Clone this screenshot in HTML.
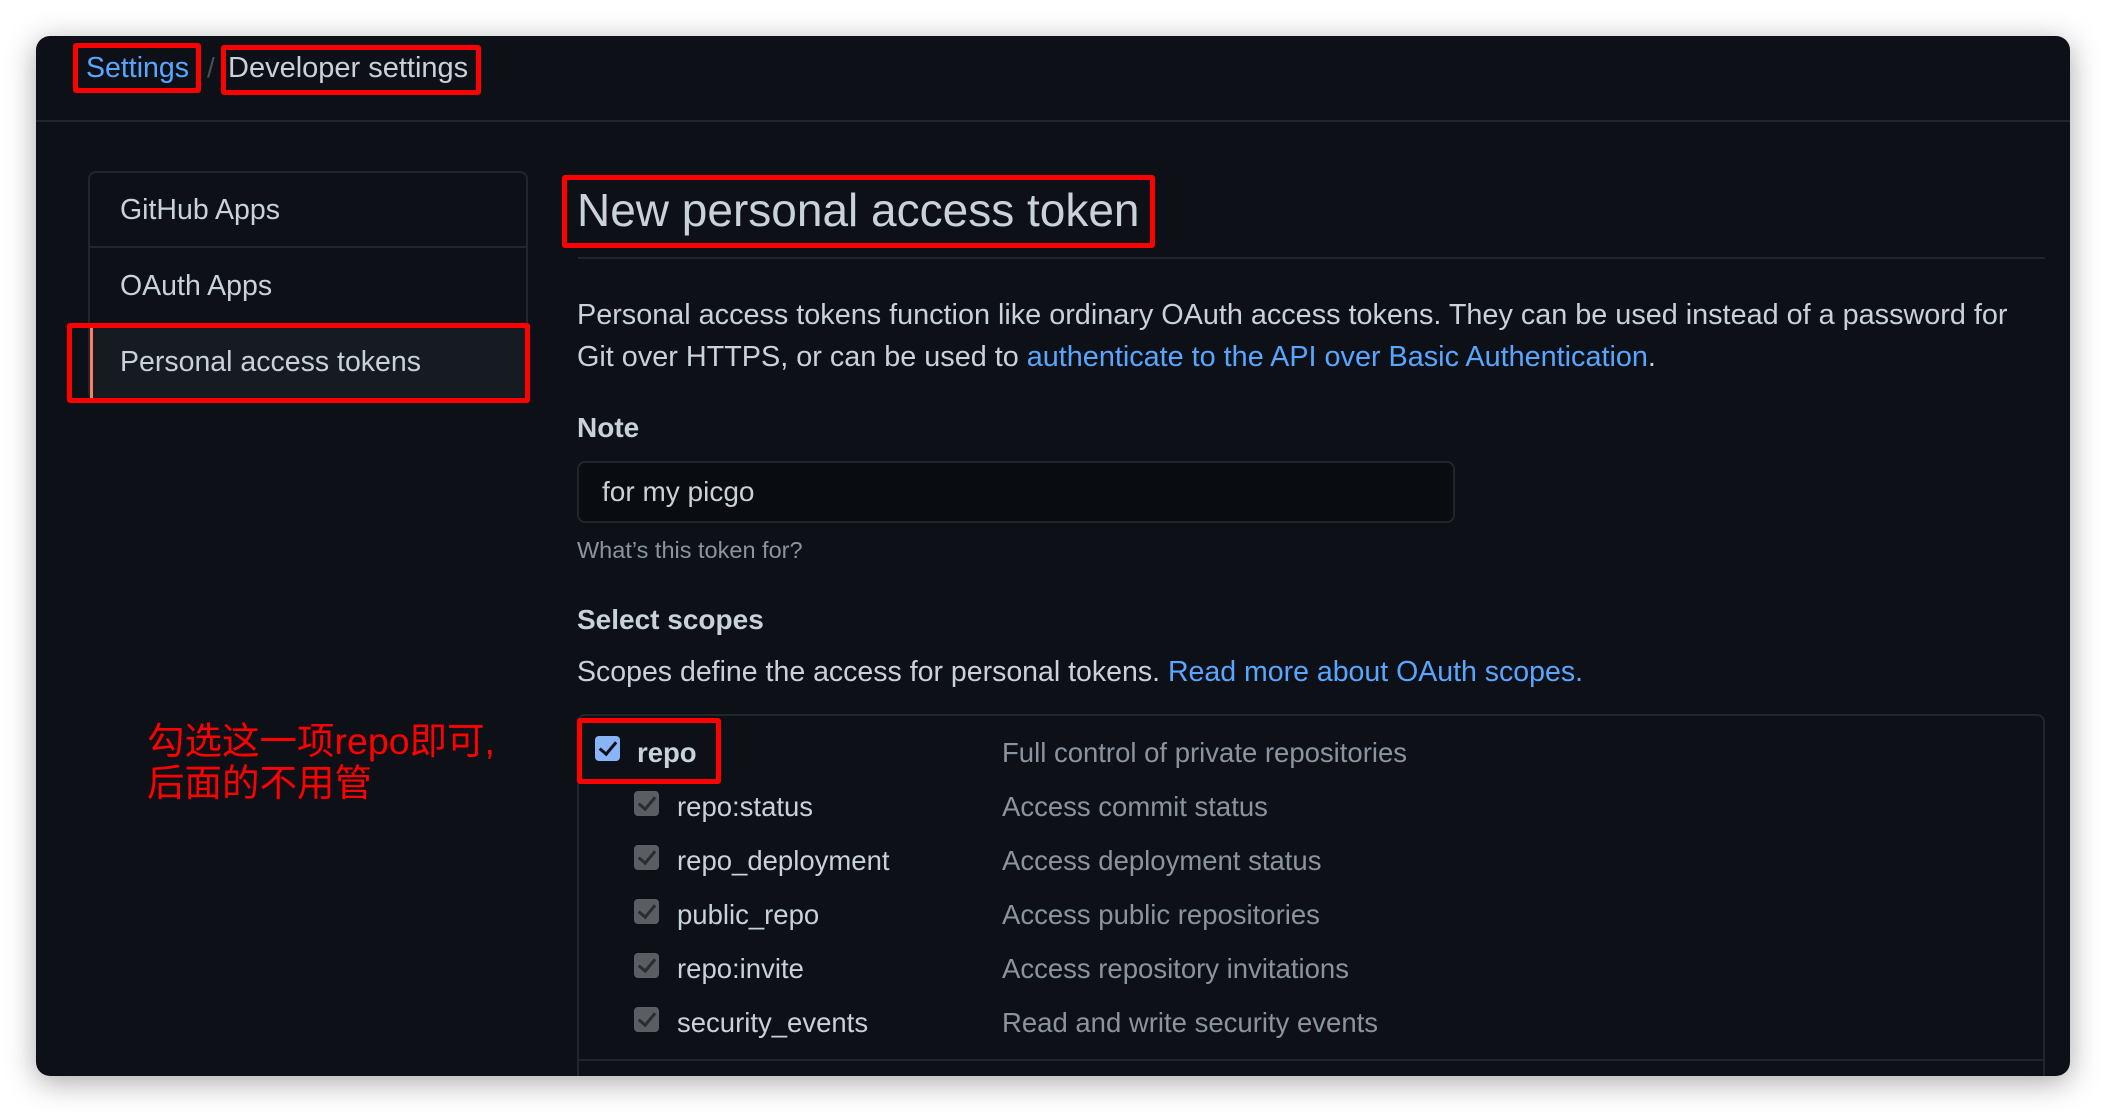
<!DOCTYPE html>
<html><head><meta charset="utf-8"><style>
*{margin:0;padding:0;box-sizing:border-box}
body{width:2106px;height:1112px;background:#fff;position:relative;overflow:hidden;font-family:"Liberation Sans","Noto Sans CJK SC",sans-serif;color:#c9d1d9}
.win{position:absolute;left:36px;top:36px;width:2034px;height:1040px;background:#0d1117;border-radius:14px;box-shadow:0 6px 30px rgba(0,0,0,.35);overflow:hidden}
.a{position:absolute;white-space:nowrap}
.rb{position:absolute;border:5px solid #f00;border-radius:3px}
.link{color:#58a6ff}
.cb{position:absolute;width:25px;height:25px;border-radius:4px;background:#5a5e63}
.cb::after{content:"";position:absolute;left:8px;top:2px;width:7px;height:14px;border:solid #2a2d31;border-width:0 3px 3px 0;transform:rotate(40deg)}
.cb.on{background:#8ab4f8}
.cb.on::after{border-color:#0d1117}
.sn{font-size:27.5px;color:#c9d1d9}
.sd{font-size:27.5px;color:#8b949e}
</style></head><body>
<div class="win">
  <div class="a" style="left:50px;top:14px;font-size:28.5px;line-height:36px;color:#58a6ff">Settings</div>
  <div class="a" style="left:171px;top:14px;font-size:28px;line-height:36px;color:#484f58">/</div>
  <div class="a" style="left:192px;top:14px;font-size:29px;line-height:36px">Developer settings</div>
  <div class="rb" style="left:37px;top:7px;width:128px;height:50px"></div>
  <div class="rb" style="left:185px;top:9px;width:260px;height:50px"></div>
  <div style="position:absolute;left:0;top:84px;width:100%;height:2px;background:#21262d"></div>

  <div style="position:absolute;left:52px;top:135px;width:440px;height:230px;border:2px solid #21262d;border-radius:8px"></div>
  <div style="position:absolute;left:52px;top:210px;width:440px;height:2px;background:#21262d"></div>
  <div style="position:absolute;left:52px;top:287px;width:440px;height:2px;background:#21262d"></div>
  <div style="position:absolute;left:54px;top:289px;width:436px;height:74px;background:#161b22;border-left:3px solid #f78166"></div>
  <div class="a" style="left:84px;top:158px;font-size:28.5px">GitHub Apps</div>
  <div class="a" style="left:84px;top:234px;font-size:28.5px">OAuth Apps</div>
  <div class="a" style="left:84px;top:310px;font-size:28.5px">Personal access tokens</div>
  <div class="rb" style="left:31px;top:287px;width:463px;height:80px"></div>

  <div class="a" style="left:541px;top:146px;font-size:46px;line-height:56px">New personal access token</div>
  <div class="rb" style="left:526px;top:139px;width:593px;height:73px"></div>
  <div style="position:absolute;left:542px;top:221px;width:1467px;height:2px;background:#21262d"></div>

  <div class="a" style="left:541px;top:258px;font-size:28.8px;line-height:42px">Personal access tokens function like ordinary OAuth access tokens. They can be used instead of a password for<br>Git over HTTPS, or can be used to <span class="link">authenticate to the API over Basic Authentication</span>.</div>

  <div class="a" style="left:541px;top:376px;font-size:28px;font-weight:bold">Note</div>
  <div style="position:absolute;left:541px;top:425px;width:878px;height:62px;background:#090c10;border:2px solid #21262d;border-radius:8px"></div>
  <div class="a" style="left:566px;top:440px;font-size:28px">for my picgo</div>
  <div class="a" style="left:541px;top:501px;font-size:23.5px;color:#8b949e">What’s this token for?</div>

  <div class="a" style="left:541px;top:568px;font-size:28px;font-weight:bold">Select scopes</div>
  <div class="a" style="left:541px;top:620px;font-size:28.5px">Scopes define the access for personal tokens. <span class="link">Read more about OAuth scopes.</span></div>

  <div style="position:absolute;left:541px;top:678px;width:1468px;height:400px;border:2px solid #21262d;border-radius:8px"></div>
  <div style="position:absolute;left:541px;top:1023px;width:1468px;height:2px;background:#21262d"></div>

  <div class="cb on" style="left:559px;top:700px"></div>
  <div class="a sn" style="left:601px;top:701px;font-weight:bold">repo</div>
  <div class="a sd" style="left:966px;top:701px">Full control of private repositories</div>
  <div class="rb" style="left:541px;top:682px;width:144px;height:66px"></div>

  <div class="cb" style="left:598px;top:755px"></div><div class="a sn" style="left:641px;top:755px">repo:status</div><div class="a sd" style="left:966px;top:755px">Access commit status</div>
  <div class="cb" style="left:598px;top:809px"></div><div class="a sn" style="left:641px;top:809px">repo_deployment</div><div class="a sd" style="left:966px;top:809px">Access deployment status</div>
  <div class="cb" style="left:598px;top:863px"></div><div class="a sn" style="left:641px;top:863px">public_repo</div><div class="a sd" style="left:966px;top:863px">Access public repositories</div>
  <div class="cb" style="left:598px;top:917px"></div><div class="a sn" style="left:641px;top:917px">repo:invite</div><div class="a sd" style="left:966px;top:917px">Access repository invitations</div>
  <div class="cb" style="left:598px;top:971px"></div><div class="a sn" style="left:641px;top:971px">security_events</div><div class="a sd" style="left:966px;top:971px">Read and write security events</div>

  <div class="a" style="left:111px;top:684px;font-size:37.5px;line-height:42px;color:#f00">勾选这一项repo即可,<br>后面的不用管</div>
</div>
</body></html>
